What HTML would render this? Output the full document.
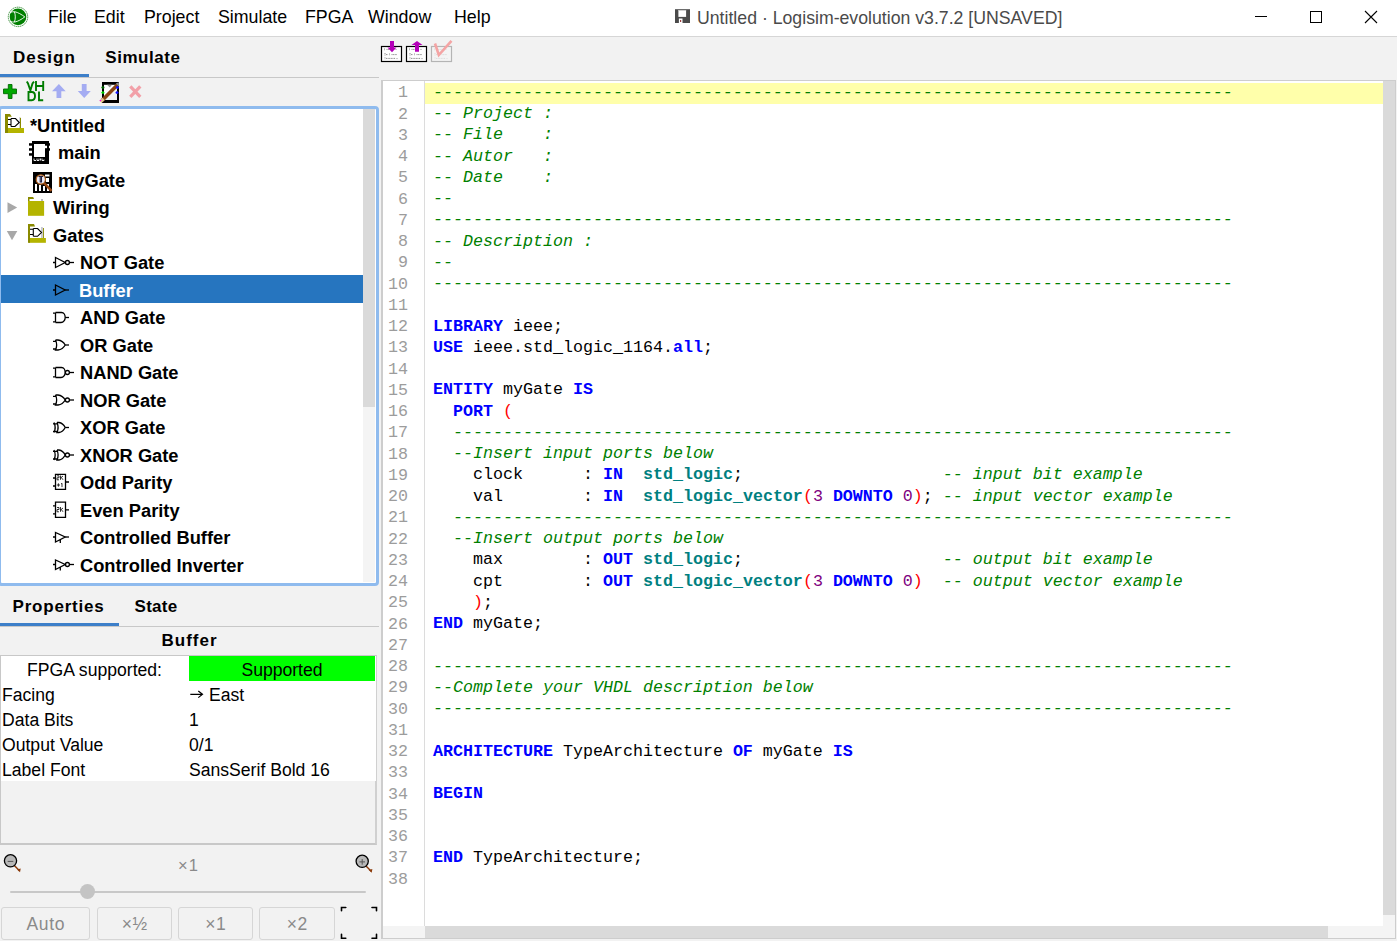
<!DOCTYPE html>
<html><head><meta charset="utf-8">
<style>
*{box-sizing:border-box;margin:0;padding:0}
html,body{width:1397px;height:941px;overflow:hidden;background:#f2f2f2;font-family:"Liberation Sans",sans-serif;position:relative}
.a{position:absolute;white-space:pre}
#title{left:0;top:0;width:1397px;height:37px;background:#fff;border-bottom:1px solid #d6d6d6}
.menu{top:7px;font-size:17.8px;color:#000;line-height:20px}
.tab{font-weight:bold;font-size:17px;color:#000;line-height:20px}
.tree .r{position:absolute;left:0;height:27.5px;width:363px;font-weight:bold;font-size:18.3px;line-height:27.5px;color:#000}
.tree .r span{top:1.5px}
.code{font-family:"Liberation Mono",monospace;font-size:16.67px;line-height:21.25px}
.ln{font-family:"Liberation Mono",monospace;font-size:16.67px;line-height:21.25px;color:#9c9c9c;text-align:right;width:25px}
.k{color:#00f;font-weight:bold}
.t{color:#008080;font-weight:bold}
.c{color:#008000;font-style:italic}
.p{color:#f00}
.n{color:#800080}
.prop{font-size:17.6px;line-height:25px;color:#000}
.btn{top:907px;height:33px;border:1px solid #d6d6d6;border-radius:3px;background:#f2f2f2;color:#8a8a8a;font-size:17.5px;line-height:32px;letter-spacing:0.6px;text-indent:0.6px;text-align:center}
</style></head><body>
<!-- title bar -->
<div id="title" class="a"></div>
<svg class="a" style="left:0;top:0" width="36" height="36" viewBox="0 0 36 36">
<circle cx="18" cy="16.9" r="9.7" fill="none" stroke="#3a8f3a" stroke-width="1" stroke-dasharray="1.4 0.6"/>
<circle cx="18" cy="16.9" r="8.3" fill="#008000"/>
<path d="M10.2 12.3C12 11.8 13.5 11.6 15 11.8C18 12.4 21.5 14.5 24.8 16.9C21.5 19.3 18 21.4 15 22C13.5 22.2 12 22 10.2 21.5" fill="none" stroke="#fff" stroke-width="0.9"/>
<path d="M14.4 11.9C15.6 14.5 15.6 19.3 14.4 21.9" fill="none" stroke="#fff" stroke-width="0.9"/>
</svg>
<div class="a menu" style="left:48px">File</div>
<div class="a menu" style="left:94px">Edit</div>
<div class="a menu" style="left:144px">Project</div>
<div class="a menu" style="left:218px">Simulate</div>
<div class="a menu" style="left:305px">FPGA</div>
<div class="a menu" style="left:368px">Window</div>
<div class="a menu" style="left:454px">Help</div>
<svg class="a" style="left:675px;top:9px" width="16" height="14" viewBox="0 0 16 14"><rect x="0" y="0.2" width="15" height="13.8" fill="#4a4a4a"/><rect x="3.4" y="1.1" width="7.7" height="6.8" fill="#fff"/><rect x="3.4" y="1.1" width="7.7" height="0.8" fill="#c8c8c8"/><rect x="3.9" y="9.5" width="3.6" height="4.5" fill="#fff"/><rect x="5" y="11" width="1.2" height="2" fill="#a04040"/></svg>
<div class="a menu" style="left:697px;top:8px;color:#4a4a4a;font-size:17.7px">Untitled · Logisim-evolution v3.7.2 [UNSAVED]</div>
<div class="a" style="left:1255px;top:16px;width:12px;height:1px;background:#000"></div>
<div class="a" style="left:1310px;top:11px;width:12px;height:12px;border:1px solid #000"></div>
<svg class="a" style="left:1364px;top:10px" width="14" height="14" viewBox="0 0 14 14"><path d="M1 1L13 13M13 1L1 13" stroke="#000" stroke-width="1.1"/></svg>

<!-- left panel tabs -->
<div class="a tab" style="left:13px;top:48px;letter-spacing:1.05px">Design</div>
<div class="a tab" style="left:105.3px;top:48px;letter-spacing:0.55px">Simulate</div>
<div class="a" style="left:0;top:77px;width:379px;height:1px;background:#c8c8c8"></div>
<div class="a" style="left:0;top:74px;width:89px;height:3px;background:#3d7fc9"></div>

<!-- tree -->
<div class="a" id="tree" style="left:-2px;top:106px;width:381px;height:480px;border:3px solid #8fbbee;border-radius:4px;background:#fff"></div>
<div class="a" style="left:363px;top:109px;width:12px;height:473px;background:#f4f4f4"></div>
<div class="a" style="left:363px;top:109px;width:12px;height:298px;background:#dadada"></div>
<div class="a tree" style="left:1px;top:110px;width:362px;height:472px;overflow:hidden">
 <div class="r" style="top:0;"><span class="a" style="left:29px">*Untitled</span></div>
 <div class="r" style="top:27.5px"><span class="a" style="left:57px">main</span></div>
 <div class="r" style="top:55px"><span class="a" style="left:57px">myGate</span></div>
 <div class="r" style="top:82.5px"><span class="a" style="left:52px">Wiring</span></div>
 <div class="r" style="top:110px"><span class="a" style="left:52px">Gates</span></div>
 <div class="r" style="top:137.5px"><span class="a" style="left:79px">NOT Gate</span></div>
 <div class="r" style="top:165px;background:#2675bf;color:#fff;left:0;width:362px"><span class="a" style="left:78px">Buffer</span></div>
 <div class="r" style="top:192.5px"><span class="a" style="left:79px">AND Gate</span></div>
 <div class="r" style="top:220px"><span class="a" style="left:79px">OR Gate</span></div>
 <div class="r" style="top:247.5px"><span class="a" style="left:79px">NAND Gate</span></div>
 <div class="r" style="top:275px"><span class="a" style="left:79px">NOR Gate</span></div>
 <div class="r" style="top:302.5px"><span class="a" style="left:79px">XOR Gate</span></div>
 <div class="r" style="top:330px"><span class="a" style="left:79px">XNOR Gate</span></div>
 <div class="r" style="top:357.5px"><span class="a" style="left:79px">Odd Parity</span></div>
 <div class="r" style="top:385px"><span class="a" style="left:79px">Even Parity</span></div>
 <div class="r" style="top:412.5px"><span class="a" style="left:79px">Controlled Buffer</span></div>
 <div class="r" style="top:440px"><span class="a" style="left:79px">Controlled Inverter</span></div>
</div>

<!-- properties -->
<div class="a tab" style="left:12.5px;top:597px;letter-spacing:0.8px">Properties</div>
<div class="a tab" style="left:134.5px;top:597px;letter-spacing:0.3px">State</div>
<div class="a" style="left:0;top:626px;width:379px;height:1px;background:#c8c8c8"></div>
<div class="a" style="left:0;top:623px;width:119px;height:3px;background:#3d7fc9"></div>
<div class="a tab" style="left:0;top:631px;width:379px;text-align:center;font-size:17px;letter-spacing:1px">Buffer</div>
<div class="a" style="left:0;top:655px;width:377px;height:190px;border:1px solid #c8c8c8;border-bottom:2px solid #c8c8c8;border-right:2px solid #d0d0d0;background:#f2f2f2"></div>
<div class="a" style="left:1px;top:656px;width:375px;height:125px;background:#fff"></div>
<div class="a" style="left:189px;top:656px;width:186px;height:25px;background:#00ff00"></div>
<div class="a prop" style="left:0;top:658px;width:189px;text-align:center">FPGA supported:</div>
<div class="a prop" style="left:189px;top:658px;width:186px;text-align:center">Supported</div>
<div class="a prop" style="left:2px;top:683px">Facing</div>
<svg class="a" style="left:188px;top:688px" width="16" height="12" viewBox="0 0 16 12"><path d="M2.3 6.3H14.3M10.3 3L14.5 6.3L10.3 9.6" stroke="#000" stroke-width="1.2" fill="none"/></svg><div class="a prop" style="left:209px;top:683px">East</div>
<div class="a prop" style="left:2px;top:708px">Data Bits</div>
<div class="a prop" style="left:189px;top:708px">1</div>
<div class="a prop" style="left:2px;top:733px">Output Value</div>
<div class="a prop" style="left:189px;top:733px">0/1</div>
<div class="a prop" style="left:2px;top:758px">Label Font</div>
<div class="a prop" style="left:189px;top:758px">SansSerif Bold 16</div>

<!-- zoom -->
<div class="a" style="left:-1px;top:853px;width:379px;text-align:center;color:#8a8a8a;font-size:16.5px;line-height:24px;letter-spacing:1px">×1</div>
<div class="a" style="left:10px;top:891px;width:356px;height:2px;background:#c8c8c8;border-radius:1px"></div>
<div class="a" style="left:80px;top:884px;width:15px;height:15px;background:#c4c4c4;border-radius:50%"></div>
<div class="a btn" style="left:1px;width:89px">Auto</div>
<div class="a btn" style="left:97px;width:75px">×½</div>
<div class="a btn" style="left:178px;width:75px">×1</div>
<div class="a btn" style="left:259px;width:76px">×2</div>

<!-- splitter -->


<!-- editor -->
<div class="a" id="editor" style="left:381px;top:80px;width:1015px;height:859px;border:1px solid #cdcdcd;border-left:2px solid #cdcdcd;background:#fff"></div>
<div class="a" style="left:424px;top:81px;width:1px;height:845px;background:#dcdcdc"></div>
<div class="a" style="left:425px;top:83px;width:958px;height:21px;background:#ffffaa"></div>
<div class="a" style="left:1383px;top:81px;width:12px;height:845px;background:#f4f4f4"></div>
<div class="a" style="left:1383px;top:81px;width:12px;height:834px;background:#dadada"></div>
<div class="a" style="left:383px;top:926px;width:1012px;height:12px;background:#f4f4f4"></div>
<div class="a" style="left:425px;top:926px;width:903px;height:12px;background:#dadada"></div>

<div class="a ln" id="lines" style="left:383px;top:82.4px">1<br>2<br>3<br>4<br>5<br>6<br>7<br>8<br>9<br>10<br>11<br>12<br>13<br>14<br>15<br>16<br>17<br>18<br>19<br>20<br>21<br>22<br>23<br>24<br>25<br>26<br>27<br>28<br>29<br>30<br>31<br>32<br>33<br>34<br>35<br>36<br>37<br>38</div>
<div class="a code" id="code" style="left:433px;top:81.8px"><span class="c">--------------------------------------------------------------------------------</span><br><span class="c">-- Project :</span><br><span class="c">-- File    :</span><br><span class="c">-- Autor   :</span><br><span class="c">-- Date    :</span><br><span class="c">--</span><br><span class="c">--------------------------------------------------------------------------------</span><br><span class="c">-- Description :</span><br><span class="c">--</span><br><span class="c">--------------------------------------------------------------------------------</span><br><br><span class="k">LIBRARY</span> ieee;<br><span class="k">USE</span> ieee.std_logic_1164.<span class="k">all</span>;<br><br><span class="k">ENTITY</span> myGate <span class="k">IS</span><br>  <span class="k">PORT</span> <span class="p">(</span><br>  <span class="c">------------------------------------------------------------------------------</span><br>  <span class="c">--Insert input ports below</span><br>    clock      <span class="o">:</span> <span class="k">IN</span>  <span class="t">std_logic</span>;                    <span class="c">-- input bit example</span><br>    val        <span class="o">:</span> <span class="k">IN</span>  <span class="t">std_logic_vector</span><span class="p">(</span><span class="n">3</span> <span class="k">DOWNTO</span> <span class="n">0</span><span class="p">)</span>; <span class="c">-- input vector example</span><br>  <span class="c">------------------------------------------------------------------------------</span><br>  <span class="c">--Insert output ports below</span><br>    max        <span class="o">:</span> <span class="k">OUT</span> <span class="t">std_logic</span>;                    <span class="c">-- output bit example</span><br>    cpt        <span class="o">:</span> <span class="k">OUT</span> <span class="t">std_logic_vector</span><span class="p">(</span><span class="n">3</span> <span class="k">DOWNTO</span> <span class="n">0</span><span class="p">)</span>  <span class="c">-- output vector example</span><br>    <span class="p">)</span>;<br><span class="k">END</span> myGate;<br><br><span class="c">--------------------------------------------------------------------------------</span><br><span class="c">--Complete your VHDL description below</span><br><span class="c">--------------------------------------------------------------------------------</span><br><br><span class="k">ARCHITECTURE</span> TypeArchitecture <span class="k">OF</span> myGate <span class="k">IS</span><br><br><span class="k">BEGIN</span><br><br><br><span class="k">END</span> TypeArchitecture;<br></div>
<svg class="a" id="icons" style="left:0;top:0" width="1397" height="941" viewBox="0 0 1397 941"><g transform="translate(53 247.5)"><path fill="none" stroke="#000" stroke-width="1.3" d="M0 15H2.5M2.5 10V20L12.2 15Z"/><circle cx="14.4" cy="15" r="2" fill="none" stroke="#000" stroke-width="1.3"/><path d="M16.4 15H21" stroke="#000" stroke-width="1.3"/></g>
<g transform="translate(53 275.0)"><path fill="none" stroke="#000" stroke-width="1.3" d="M0 15H2.5M2.5 10V20L12.2 15Z"/><path fill="none" stroke="#000" stroke-width="1.3" d="M12.2 15H16"/></g>
<g transform="translate(53 302.5)"><path fill="none" stroke="#000" stroke-width="1.3" d="M0 10.7H2.5M0 19.3H2.5M2.5 10V20M2.5 10H8.5C11 10 12.2 12.6 12.2 15C12.2 17.4 10.6 20 8 20H2.5"/><path fill="none" stroke="#000" stroke-width="1.3" d="M12.2 15H16"/></g>
<g transform="translate(53 330.0)"><path fill="none" stroke="#000" stroke-width="1.3" d="M0 11.3H3.3M0 19H3.3M2.5 10H5Q9.8 10.6 12.2 15Q9.8 19.4 5 20H2.5C3.9 17 3.9 13 2.5 10"/><path fill="none" stroke="#000" stroke-width="1.3" d="M12.2 15H16"/></g>
<g transform="translate(53 357.5)"><path fill="none" stroke="#000" stroke-width="1.3" d="M0 10.7H2.5M0 19.3H2.5M2.5 10V20M2.5 10H8.5C11 10 12.2 12.6 12.2 15C12.2 17.4 10.6 20 8 20H2.5"/><circle cx="14.4" cy="15" r="2" fill="none" stroke="#000" stroke-width="1.3"/><path d="M16.4 15H21" stroke="#000" stroke-width="1.3"/></g>
<g transform="translate(53 385.0)"><path fill="none" stroke="#000" stroke-width="1.3" d="M0 11.3H3.3M0 19H3.3M2.5 10H5Q9.8 10.6 12.2 15Q9.8 19.4 5 20H2.5C3.9 17 3.9 13 2.5 10"/><circle cx="14.4" cy="15" r="2" fill="none" stroke="#000" stroke-width="1.3"/><path d="M16.4 15H21" stroke="#000" stroke-width="1.3"/></g>
<g transform="translate(53 412.5)"><path fill="none" stroke="#000" stroke-width="1.3" d="M0 11.3H4.5M0 19H4.5M4 10H6Q10 10.6 12.2 15Q10 19.4 6 20H4C5.3 17 5.3 13 4 10M1 10C2.4 13 2.4 17 1 20"/><path fill="none" stroke="#000" stroke-width="1.3" d="M12.2 15H16"/></g>
<g transform="translate(53 440.0)"><path fill="none" stroke="#000" stroke-width="1.3" d="M0 11.3H4.5M0 19H4.5M4 10H6Q10 10.6 12.2 15Q10 19.4 6 20H4C5.3 17 5.3 13 4 10M1 10C2.4 13 2.4 17 1 20"/><circle cx="14.4" cy="15" r="2" fill="none" stroke="#000" stroke-width="1.3"/><path d="M16.4 15H21" stroke="#000" stroke-width="1.3"/></g>
<g transform="translate(53 467.5)"><path fill="none" stroke="#000" stroke-width="1.3" d="M2.5 6.8H12.5V21.8H2.5Z M0 10.5H2.5M0 18.5H2.5M12.5 14.5H16"/><path stroke="#000" stroke-width="0.8" fill="none" d="M4 8.3H6V10.3H4V12.3H6M7.5 8V12.3M7.5 10.5L10 8.5M8.3 10L10 12.3M3.8 17.5H7M5.4 15.8V19.2M9 15.8V19.6M8 16.5L9 15.8"/></g>
<g transform="translate(53 495.0)"><path fill="none" stroke="#000" stroke-width="1.3" d="M2.5 7.2H12.5V22.4H2.5Z M0 10.8H2.5M0 18.8H2.5M12.5 14.8H16"/><path stroke="#000" stroke-width="0.8" fill="none" d="M4 12.5H6V14.5H4V16.8H6M7.5 12V16.8M7.5 15L10 13M8.3 14.5L10 16.8"/></g>
<g transform="translate(53 522.5)"><path fill="none" stroke="#000" stroke-width="1.3" d="M0 14.5H2.5M2.5 10V19.5L12.2 14.5ZM7.3 17.2V20.6"/><path fill="none" stroke="#000" stroke-width="1.3" d="M12.2 14.5H16"/></g>
<g transform="translate(53 550.0)"><path fill="none" stroke="#000" stroke-width="1.3" d="M0 14.5H2.5M2.5 10V19.5L12.2 14.5ZM7.3 17.2V20.6"/><circle cx="14.4" cy="14.5" r="2" fill="none" stroke="#000" stroke-width="1.3"/><path d="M16.4 14.5H21" stroke="#000" stroke-width="1.3"/></g>
<path d="M7.5 202.3L17.2 207.6L7.5 213Z" fill="#a8a8a8"/>
<path d="M6.8 231L17.3 231L12 240.3Z" fill="#a8a8a8"/>
<g>
<rect x="6" y="128" width="18" height="5" fill="#b4b400"/>
<rect x="5" y="114" width="3" height="19" fill="#8a8a00"/>
<path d="M5 114H10L11.8 116.7H5Z" fill="#8a8a00"/>
<rect x="19.8" y="117.8" width="1.2" height="10.2" fill="#8a8a00"/>
<rect x="19" y="117" width="0.8" height="11" fill="#d0d0dc"/>
<path d="M8 119.5H11M8 124.5H11M11 118.5V126.5M11 118.5H15.5L19.3 122.5L15 126.5H11" fill="none" stroke="#000" stroke-width="1.1"/>
</g>
<g>
<rect x="28.7" y="238" width="17.2" height="4.8" fill="#b4b400"/>
<rect x="28" y="224" width="2" height="18.8" fill="#8a8a00"/>
<path d="M28 224H34L35 226.4H28Z" fill="#8a8a00"/>
<rect x="42.8" y="228" width="1.1" height="10" fill="#8a8a00"/>
<rect x="41" y="227" width="1.8" height="11" fill="#c8c8d2"/>
<path d="M30 229.3H33.3M30 234.5H33.3M33.3 228.5V236.3M33.3 228.5H37.6L41.5 232.5L37.5 236.3H33.3" fill="none" stroke="#000" stroke-width="1.1"/>
</g>
<g>
<rect x="28" y="201" width="16.1" height="14.8" fill="#b4b400"/>
<path d="M28 197H33.2L34 199H29.5V201H28Z" fill="#8a8a00"/>
<rect x="41" y="199" width="2" height="2" fill="#b8b8c0"/>
</g>
<g>
<rect x="32" y="141" width="17" height="23" fill="#000"/>
<rect x="34" y="144" width="11" height="13" fill="#fff"/>
<rect x="29" y="143.2" width="3" height="2.5" fill="#000"/>
<rect x="29" y="148.2" width="3" height="2.5" fill="#000"/>
<rect x="29" y="153.2" width="3" height="2.5" fill="#000"/>
<rect x="49" y="143.2" width="1" height="2.5" fill="#000"/>
<rect x="49" y="148.2" width="1" height="2.5" fill="#000"/>
<rect x="45" y="145.7" width="2" height="2.5" fill="#fff"/>
<path d="M34 158.5V160.5H36M37 158.5V160.5H39V158.5M40.5 158.5V160.5M42 158.5V160.5H44V159.5" stroke="#fff" stroke-width="0.9" fill="none"/>
</g>
<g>
<rect x="33" y="172" width="19" height="21" fill="#000"/>
<rect x="45" y="174.5" width="4.5" height="2" fill="#fff"/>
<rect x="46" y="178" width="3" height="4" fill="#fff"/>
<rect x="35" y="184" width="2" height="7" fill="#fff"/>
<rect x="39" y="185" width="2" height="6" fill="#fff"/>
<rect x="43" y="186" width="2" height="5" fill="#fff"/>
<rect x="47" y="184" width="2" height="7" fill="#fff"/>
<circle cx="40.8" cy="179.5" r="4.6" fill="#ececf8" stroke="#b4621c" stroke-width="1.2"/>
<path d="M38.5 176.5H43M40.2 176.5V182H41.5V176.5" stroke="#202040" stroke-width="1.1" fill="none"/>
<path d="M44.2 183.2L51.5 190.8" stroke="#9a4a14" stroke-width="2.6"/>
</g>
<path d="M8.3 84.5H12V89H16.5V93.7H12V98.5H8.3V93.7H3.5V89H8.3Z" fill="#00a800" stroke="#006a00" stroke-width="0.9"/>
<path d="M26.8 81.6L28 83.5L30.4 90.5L32.5 83.5L34 81.6" stroke="#007c00" stroke-width="1.9" fill="none"/>
<path d="M36 81V91M43.2 81V91M36 86H43.2" stroke="#007c00" stroke-width="1.9" fill="none"/>
<path d="M28.5 92V100.2H31.8C34.2 100.2 35 98.5 35 96.1C35 93.7 34.2 92 31.8 92Z" stroke="#007c00" stroke-width="1.9" fill="none"/>
<path d="M39 91.5V100.2H43.2" stroke="#007c00" stroke-width="1.9" fill="none"/>
<path d="M58.9 84L65.7 91.2H61.3V98H56.5V91.2H52Z" fill="#a4acf2"/>
<path d="M81.8 84H86.6V91H90.8L84.2 98L77.8 91H81.8Z" fill="#a4acf2"/>
<rect x="102" y="82" width="17" height="21" fill="#000"/>
<rect x="104" y="84.8" width="13" height="15.2" fill="#fff"/>
<path d="M117 84.8V100H104Z" fill="#f0f0f0"/>
<path d="M107 84.8H112L109.8 87.5Z" fill="#8a8a8a"/>
<path d="M102 100.5L117.3 85" stroke="#8b4513" stroke-width="3.6"/>
<path d="M100.6 101.8L103.6 98.8" stroke="#e0c090" stroke-width="3.2"/>
<path d="M115.8 83.5L118.8 82.3L119 86.8Z" fill="#909090"/>
<path d="M102.9 86V89M101.4 87.5H104.4" stroke="#006400" stroke-width="1.3"/>
<path d="M102.9 91.1V94.1M101.4 92.6H104.4" stroke="#00d000" stroke-width="1.3"/>
<path d="M117.4 86V89M115.9 87.5H118.9" stroke="#1010ff" stroke-width="1.3"/>
<path d="M117 91.1V94.1M115.5 92.6H118.5" stroke="#1010ff" stroke-width="1.3"/>
<circle cx="100.4" cy="100.5" r="0.8" fill="#f0f"/>
<path d="M130.3 86.3L140.3 96.8M140.3 86.3L130.3 96.8" stroke="#f2a0a8" stroke-width="3.2"/>
<rect x="381.5" y="46.5" width="20" height="15" fill="#fff" stroke="#000" stroke-width="1.2"/>
<path d="M384.5 48.5V50.3M386.5 49.4H393.5M395.5 49.4H396.5M385 53V55.5M386 54.6H388M389.5 53.5V55.3M391.5 54.6H397M385 57.4V59.2M386 58.4H395.5M396.5 58.6H397.5" stroke="#909090" stroke-width="1" stroke-dasharray="1.1 0.5"/>
<path d="M390 41H394V47.5H396.5L392 52.2L387.5 47.5H390Z" fill="#b400b8"/>
<rect x="406.5" y="46.5" width="20" height="15" fill="#fff" stroke="#000" stroke-width="1.2"/>
<path d="M409.5 48.5V50.3M411.5 49.4H418.5M420.5 49.4H421.5M410 53V55.5M411 54.6H413M414.5 53.5V55.3M416.5 54.6H422M410 57.4V59.2M411 58.4H420.5M421.5 58.6H422.5" stroke="#909090" stroke-width="1" stroke-dasharray="1.1 0.5"/>
<path d="M417 41L422.5 45H419V51.7H415V45H411.5Z" fill="#b400b8"/>
<rect x="431.5" y="46.5" width="20" height="15" fill="#f4f4f4" stroke="#b4b4b4" stroke-width="1.2"/>
<path d="M434.5 48.5V50.3M436.5 49.4H443.5M445.5 49.4H446.5M435 53V55.5M436 54.6H438M439.5 53.5V55.3M441.5 54.6H447M435 57.4V59.2M436 58.4H445.5M446.5 58.6H447.5" stroke="#dcdcdc" stroke-width="1" stroke-dasharray="1.1 0.5"/>
<path d="M435 43.5L438.8 55L451.5 40.8" stroke="#f4a4a4" stroke-width="2.6" fill="none"/>
<path d="M14.3 865.4L19.5 870.8" stroke="#8b3a0a" stroke-width="1.4"/><path d="M17.0 869.5L20.7 868.5999999999999L20.0 872.3Z" fill="#8b3a0a"/><circle cx="10.5" cy="860.8" r="6.1" fill="#b8b8b8" stroke="#000" stroke-width="1.3"/><path d="M7.7 861.4H13.3" stroke="#555" stroke-width="1"/>
<path d="M366.0 865.9L371.2 871.3" stroke="#8b3a0a" stroke-width="1.4"/><path d="M368.7 870.0L372.4 869.0999999999999L371.7 872.8Z" fill="#8b3a0a"/><circle cx="362.2" cy="861.3" r="6.1" fill="#b8b8b8" stroke="#000" stroke-width="1.3"/><path d="M359.4 861.9H365.0" stroke="#555" stroke-width="1"/><path d="M362.2 859.0999999999999V864.6999999999999" stroke="#555" stroke-width="1"/>
<path d="M341.5 910.8V907.5H345.8M372 907.5H376.5V910.8M341.5 934.2V938.3H345.8M372 938.3H376.5V934.2" stroke="#000" stroke-width="1.6" stroke-linecap="round" fill="none"/></svg>
</body></html>
